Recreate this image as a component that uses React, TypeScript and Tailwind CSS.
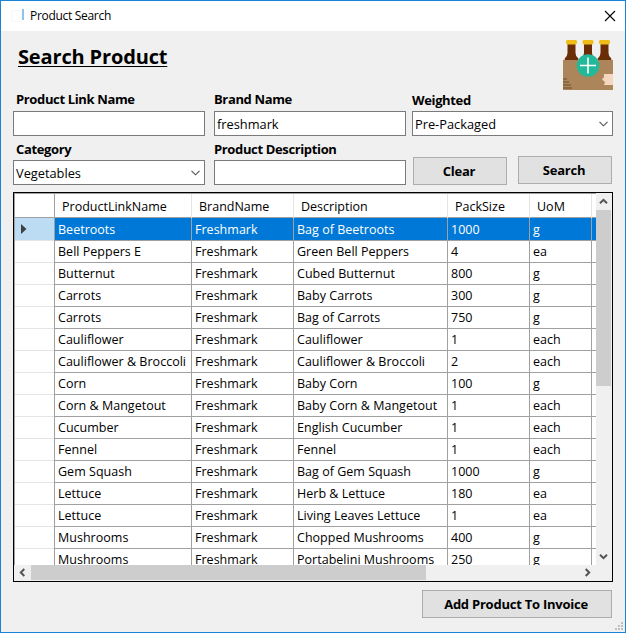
import React from "react";

const rows: string[][] = [
  ["Beetroots", "Bag of Beetroots", "1000", "g"],
  ["Bell Peppers E", "Green Bell Peppers", "4", "ea"],
  ["Butternut", "Cubed Butternut", "800", "g"],
  ["Carrots", "Baby Carrots", "300", "g"],
  ["Carrots", "Bag of Carrots", "750", "g"],
  ["Cauliflower", "Cauliflower", "1", "each"],
  ["Cauliflower & Broccoli", "Cauliflower & Broccoli", "2", "each"],
  ["Corn", "Baby Corn", "100", "g"],
  ["Corn & Mangetout", "Baby Corn & Mangetout", "1", "each"],
  ["Cucumber", "English Cucumber", "1", "each"],
  ["Fennel", "Fennel", "1", "each"],
  ["Gem Squash", "Bag of Gem Squash", "1000", "g"],
  ["Lettuce", "Herb & Lettuce", "180", "ea"],
  ["Lettuce", "Living Leaves Lettuce", "1", "ea"],
  ["Mushrooms", "Chopped Mushrooms", "400", "g"],
  ["Mushrooms", "Portabelini Mushrooms", "250", "g"],
];

const gridCols = "grid grid-cols-[40px_137px_102px_154px_82px_62px_4px]";

function Label({ children, className = "" }: { children: React.ReactNode; className?: string }) {
  return (
    <div className={`h-[25px] whitespace-nowrap text-[13px] font-bold leading-[18px] tracking-[-0.36px] ${className}`}>
      {children}
    </div>
  );
}

function Field({ value = "", select = false }: { value?: string; select?: boolean }) {
  return (
    <div className="flex h-[25px] items-center justify-between border border-[#7a7a7a] bg-white pl-0.5 pr-1 text-[12.8px] leading-[18px]">
      <span>{value}</span>
      {select && (
        <svg width="9" height="6" viewBox="0 0 9 6" fill="none" stroke="#505050" strokeWidth="1.1">
          <path d="M.5 .8 4.5 4.8 8.5 .8" />
        </svg>
      )}
    </div>
  );
}

function Button({ children }: { children: React.ReactNode }) {
  return (
    <button className="flex h-7 w-full items-center justify-center border border-[#adadad] bg-[#e1e1e1] pr-0.5 text-[13px] font-bold leading-[18px] tracking-[-0.24px]">
      {children}
    </button>
  );
}

function Chevron({ rotate = "" }: { rotate?: string }) {
  return (
    <svg className={rotate} width="9" height="9" viewBox="0 0 9 9" fill="none" stroke="#555" strokeWidth="2">
      <path d="M1 6.3 4.5 2.8 8 6.3" />
    </svg>
  );
}

function Crate() {
  return (
    <svg width="50" height="50" viewBox="0 0 50 50">
      {[8.5, 25, 41.5].map((x) => (
        <g key={x} transform={`translate(${x} 0)`}>
          <path d="M-4 4H4V13Q4 16 6.8 18.5V22H-6.8V18.5Q-4 16-4 13Z" fill="#6b2d06" />
          <path d="M-4.5 0H4.5L5.5 1V3L4.5 4.5H-4.5L-5.5 3V1Z" fill="#f0bd18" />
        </g>
      ))}
      <path d="M0 20H50V50H0Z" fill="#ac855a" />
      <path d="M0 39H4M0 42H6M0 45H8M0 48H9" stroke="#80603f" strokeWidth="1.4" />
      <path d="M50 34H41V37L39 39.5 42 42 41 45H50Z" fill="#f5d6c0" />
      <circle cx="25" cy="25.5" r="11.3" fill="#23b899" />
      <path d="M25 17.5V33.5M17 25.5H33" stroke="#fff" strokeWidth="1.6" />
    </svg>
  );
}

export default function App() {
  return (
    <div className="flex h-[633px] w-[626px] flex-col overflow-hidden border border-[#1883d7] bg-[#f0f0f0] font-['Open_Sans','Noto_Sans',sans-serif] text-black">
      <header className="flex h-[30px] shrink-0 items-center bg-white pl-2.5 pr-[9px]">
        <div className="h-3 w-[11px] border border-[#f8f8f8]" />
        <div className="-mt-1 h-[11px] w-0.5 bg-[#8fc4f0]" />
        <span className="ml-1.5 text-[12px] leading-[16px] tracking-[-0.3px]">Product Search</span>
        <svg className="ml-auto" width="12" height="12" viewBox="0 0 12 12" stroke="#000" strokeWidth="1.1">
          <path d="M1 1 11 11M11 1 1 11" />
        </svg>
      </header>

      <div className="flex h-[55px] shrink-0 justify-between pl-[17px] pr-3">
        <h1 className="pt-3 text-[20px] font-bold leading-[28px] tracking-[-0.15px] underline decoration-1 underline-offset-2">Search Product</h1>
        <div className="pt-[9px]"><Crate /></div>
      </div>

      <div className="grid shrink-0 grid-cols-[192px_192px_201px] pl-3">
        <div className="mr-0">
          <Label className="pl-[3px] pt-1">Product Link Name</Label>
          <Field />
          <Label className="-mt-px pl-[3px] pt-[5px]">Category</Label>
          <Field value="Vegetables" select />
        </div>
        <div className="ml-[9px] -mr-[9px]">
          <Label className="pt-1">Brand Name</Label>
          <Field value="freshmark" />
          <Label className="-mt-px pt-[5px]">Product Description</Label>
          <Field />
        </div>
        <div className="ml-[15px] -mr-[15px]">
          <Label className="pt-[5px]">Weighted</Label>
          <Field value="Pre-Packaged" select />
          <div className="flex justify-between pl-px pr-px pt-5">
            <div className="w-[94px] pt-px"><Button>Clear</Button></div>
            <div className="w-[94px]"><Button>Search</Button></div>
          </div>
        </div>
      </div>

      <section className="ml-3 mt-[7px] flex h-[390px] w-[600px] shrink-0 flex-col border border-black bg-[#f0f0f0] text-[12.5px]">
        <div className="flex h-[372px]">
          <div className="h-full w-[582px] overflow-hidden border-l border-t border-[#a0a0a0] bg-white">
            <div className={`${gridCols} h-6 border-b border-[#a0a0a0]`}>
              <span className="border-r border-[#a0a0a0]" />
              {["ProductLinkName", "BrandName", "Description", "PackSize", "UoM"].map((name) => (
                <span key={name} className="border-r border-[#e5e5e5] pl-[7px] pt-px leading-[23px]">{name}</span>
              ))}
            </div>
            {rows.map(([name, description, size, unit], i) => (
              <div key={i} className={`${gridCols} h-[22px] ${i === 0 ? "bg-[#0078d7] text-white" : ""}`}>
                <span className={`flex items-center border-b border-r border-b-[#e5e5e5] border-r-[#a0a0a0] pl-1.5 ${i === 0 ? "bg-[#bcdcf4]" : ""}`}>
                  {i === 0 && (
                    <svg width="6" height="10" viewBox="0 0 6 10"><path d="M0 0 5.5 5 0 10Z" fill="#404040" /></svg>
                  )}
                </span>
                {[name, "Freshmark", description, size, unit].map((value, j) => (
                  <span key={j} className="whitespace-nowrap border-b border-r border-[#a0a0a0] pl-[3px] pt-0.5 leading-[20px] tracking-[0.02px]">{value}</span>
                ))}
                <span className="border-b border-[#a0a0a0]" />
              </div>
            ))}
          </div>
          <div className="flex w-[15px] flex-col items-center justify-between pb-1 pt-1">
            <Chevron />
            <div className="mb-auto mt-1 h-[176px] w-[15px] bg-[#cdcdcd]" />
            <Chevron rotate="rotate-180" />
          </div>
        </div>
        <div className="flex h-[15px] w-[582px] items-center pl-1 pr-1">
          <Chevron rotate="-rotate-90" />
          <div className="ml-1 mr-auto h-[15px] w-[395px] bg-[#cdcdcd]" />
          <Chevron rotate="rotate-90" />
        </div>
      </section>

      <div className="flex justify-end pr-[13px] pt-2">
        <div className="w-[190px]"><Button>Add Product To Invoice</Button></div>
      </div>
      <div className="flex justify-end pr-0.5 pt-1">
        <svg width="8" height="8" viewBox="0 0 8 8" fill="#bfbfbf">
          <path d="M6 0h2v2H6zM3 3h2v2H3zM6 3h2v2H6zM0 6h2v2H0zM3 6h2v2H3zM6 6h2v2H6z" />
        </svg>
      </div>
    </div>
  );
}
